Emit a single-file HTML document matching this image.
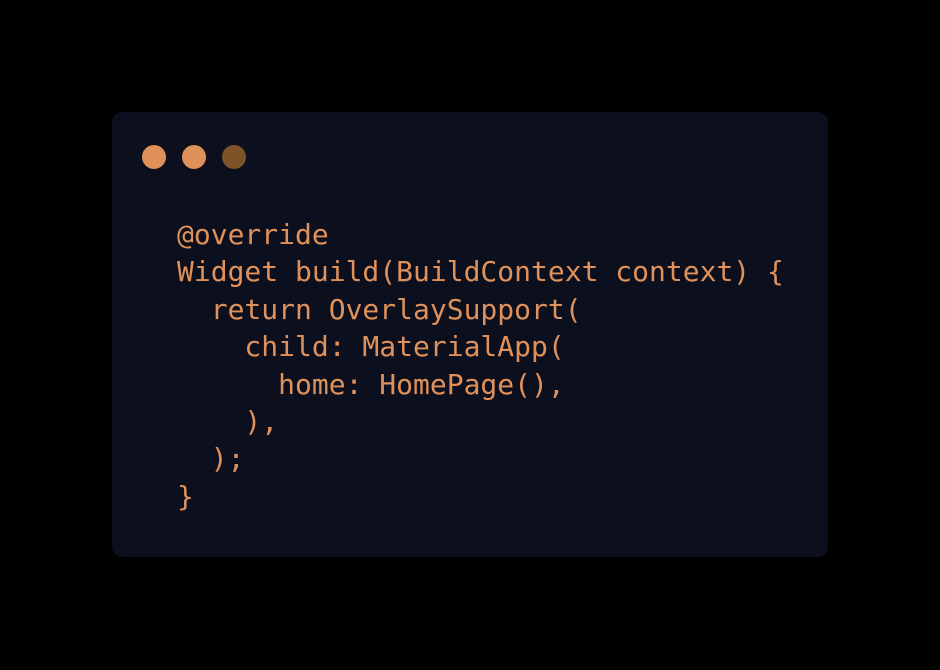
<!DOCTYPE html>
<html><head><style>
html,body{margin:0;padding:0;background:#000;width:940px;height:670px;overflow:hidden}
.card{position:absolute;left:112px;top:112px;width:716px;height:445px;background:#0c0f1e;border-radius:10px}
.dot{position:absolute;top:33px;width:24px;height:24px;border-radius:50%}
pre{position:absolute;left:65px;top:104px;margin:0;font-family:"DejaVu Sans Mono","Liberation Mono",monospace;font-size:28px;line-height:37.4px;color:#e0915a}
</style></head><body>
<div class="card">
<div class="dot" style="left:30px;background:#e0915a"></div>
<div class="dot" style="left:70px;background:#e0915a"></div>
<div class="dot" style="left:110px;background:#7f5328"></div>
<pre>@override
Widget build(BuildContext context) {
  return OverlaySupport(
    child: MaterialApp(
      home: HomePage(),
    ),
  );
}</pre>
</div>
</body></html>
